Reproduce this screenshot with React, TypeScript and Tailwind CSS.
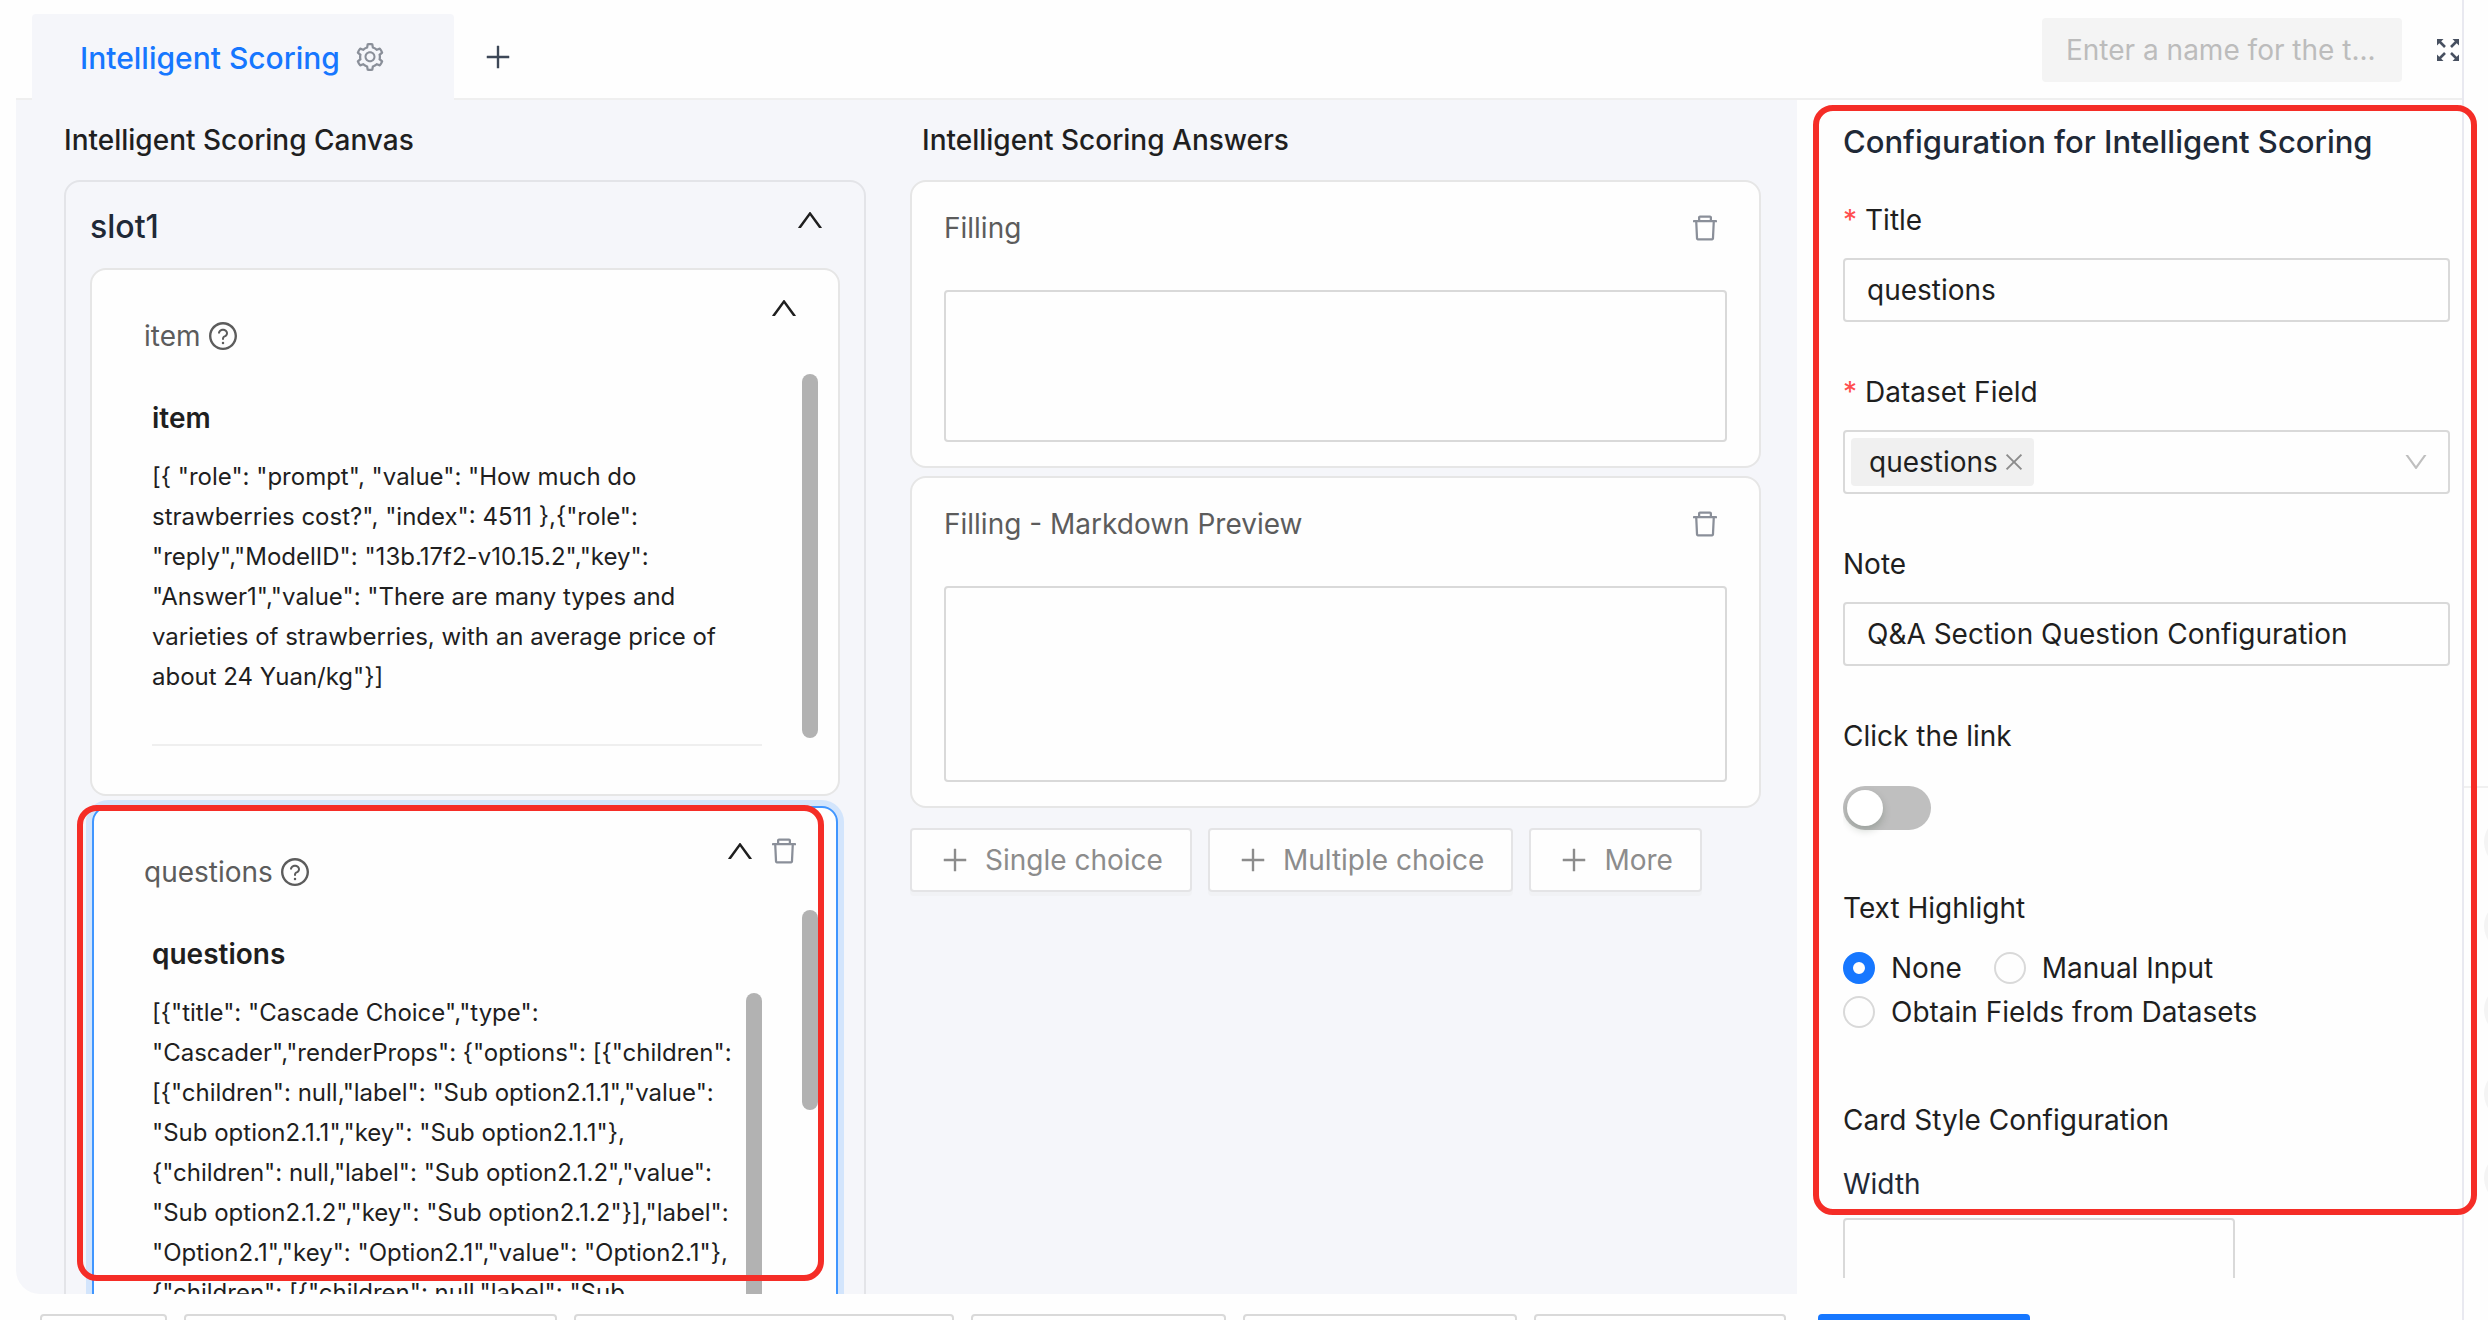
import { useState, type ReactNode } from "react";
import {
  AiOutlineSetting,
  AiOutlinePlus,
  AiOutlineUp,
  AiOutlineDown,
  AiOutlineDelete,
  AiOutlineQuestionCircle,
  AiOutlineClose,
} from "react-icons/ai";

function ExpandIcon() {
  return (
    <svg viewBox="0 0 22 22" className="size-[22px]" fill="none" stroke="#475060" strokeWidth="2.6">
      <path d="M2 2l6 6M20 2l-6 6M2 20l6-6M20 20l-6-6" />
      <path d="M0 0h6.5L0 6.5zM22 0v6.5L15.500 0zM0 22v-6.500L6.500 22zM22 22h-6.500L22 15.500z" fill="#475060" stroke="none" />
    </svg>
  );
}

function IconButton({ label, className, children }: { label: string; className?: string; children: ReactNode }) {
  return (
    <button type="button" aria-label={label} className={`flex size-7 items-center justify-center ${className ?? ""}`}>
      {children}
    </button>
  );
}

function Header() {
  return (
    <header className="flex h-[100px] shrink-0 items-end border-b-2 border-[#efefef] bg-[#fefefe] pl-4">
      <div className="-mb-0.5 flex h-[86px] w-[422px] items-center gap-4 rounded-t bg-[#f5f6fa] px-12">
        <button type="button" className="pt-0.5 text-[30px] leading-10 font-medium text-[#1677ff]">
          Intelligent Scoring
        </button>
        <IconButton label="Tab settings" className="text-[#8a8f99]">
          <AiOutlineSetting size={32} className="shrink-0" />
        </IconButton>
      </div>
      <IconButton label="Add tab" className="mb-[27px] ml-[30px] text-[#3d4757]">
        <AiOutlinePlus size={32} className="shrink-0" />
      </IconButton>
      <input
        aria-label="Template name"
        placeholder="Enter a name for the t..."
        className="mb-4 ml-auto h-16 w-[360px] rounded bg-[#f4f4f4] px-6 text-[28px] placeholder:text-[#bcbcbc]"
      />
      <button type="button" aria-label="Full screen" className="mr-[3px] mb-[37px] ml-[35px]">
        <ExpandIcon />
      </button>
    </header>
  );
}

function FieldCard({
  name,
  active,
  divider,
  text,
  thumb,
  inner,
}: {
  name: string;
  active?: boolean;
  divider?: boolean;
  text: string;
  thumb: string;
  inner?: boolean;
}) {
  return (
    <section
      className={`shrink-0 rounded-2xl border-2 bg-[#fefefe] ${
        active ? "mx-0.5 h-[760px] border-[#4096ff] pr-[18px] pl-[50px] shadow-[0_0_0_6px_#d3e5fc]" : "h-[528px] border-[#e6e6e6] pr-5 pl-[52px]"
      }`}
    >
      <div className={`flex justify-between pr-5 ${active ? "h-[102px]" : "h-[104px]"}`}>
        <h3 className={`flex items-center gap-1.5 text-[28px] leading-9 text-[#5c5c5c] ${active ? "pt-[26px]" : "pt-7"}`}>
          {name}
          <AiOutlineQuestionCircle size={32} />
        </h3>
        <div className={`flex gap-4 text-[#1f1f1f] ${active ? "pt-[29px]" : "pt-6"}`}>
          <IconButton label={`Collapse ${name}`}>
            <AiOutlineUp size={32} className="shrink-0" />
          </IconButton>
          {active && (
            <IconButton label={`Delete ${name}`} className="text-[#8a8f99]">
              <AiOutlineDelete size={32} className="shrink-0" />
            </IconButton>
          )}
        </div>
      </div>
      <div className="flex pl-2">
        <div className="min-w-0 flex-1 pt-[26px]">
          <h4 className="text-[28px] leading-9 font-semibold text-[#1f1f1f]">{name}</h4>
          <div className="mt-[21px] flex">
            <p className="min-w-0 flex-1 text-[24px] leading-10 whitespace-pre text-[#1f1f1f]">{text}</p>
            {inner && <div className="h-[560px] w-4 shrink-0 rounded-full bg-[#b2b2b2]" />}
          </div>
          {divider && <hr className="mt-[47px] border-t-2 border-[#efefef]" />}
        </div>
        <div className={`ml-10 w-4 shrink-0 rounded-full bg-[#b2b2b2] ${thumb}`} />
      </div>
    </section>
  );
}

const itemText = `[{ "role": "prompt", "value": "How much do
strawberries cost?", "index": 4511 },{"role":
"reply","ModelID": "13b.17f2-v10.15.2","key":
"Answer1","value": "There are many types and
varieties of strawberries, with an average price of
about 24 Yuan/kg"}]`;

const questionsText = `[{"title": "Cascade Choice","type":
"Cascader","renderProps": {"options": [{"children":
[{"children": null,"label": "Sub option2.1.1","value":
"Sub option2.1.1","key": "Sub option2.1.1"},
{"children": null,"label": "Sub option2.1.2","value":
"Sub option2.1.2","key": "Sub option2.1.2"}],"label":
"Option2.1","key": "Option2.1","value": "Option2.1"},
{"children": [{"children": null,"label": "Sub`;

function CanvasColumn() {
  return (
    <div className="w-[802px] shrink-0">
      <h2 className="flex h-20 items-center text-[28px] font-medium text-[#1f1f1f]">Intelligent Scoring Canvas</h2>
      <section className="rounded-2xl border-2 border-[#e3e4e8] px-6">
        <div className="flex h-[86px] justify-between pr-4">
          <h3 className="flex items-center pt-1 text-[32px] font-medium text-[#1f2937]">slot1</h3>
          <IconButton label="Collapse slot1" className="mt-6 text-[#1f1f1f]">
            <AiOutlineUp size={32} className="shrink-0" />
          </IconButton>
        </div>
        <div className="relative flex flex-col gap-[10px]">
          <FieldCard name="item" text={itemText} divider thumb="h-[364px]" />
          <FieldCard name="questions" text={questionsText} active inner thumb="h-[200px]" />
          <div className="pointer-events-none absolute top-[537px] right-4 -left-[13px] h-[476px] rounded-[20px] border-[6px] border-[#f52d27]" />
        </div>
      </section>
    </div>
  );
}

function AnswerCard({ title, area }: { title: string; area: string }) {
  return (
    <section className="mb-2 rounded-2xl border-2 border-[#e6e6e6] bg-[#fefefe] px-8 pb-6">
      <div className="flex h-[108px] items-start justify-between pt-7 pr-2">
        <h3 className="text-[28px] leading-9 text-[#5c5c5c]">{title}</h3>
        <IconButton label={`Delete ${title}`} className="mt-1 text-[#8a8f99]">
          <AiOutlineDelete size={32} className="shrink-0" />
        </IconButton>
      </div>
      <textarea aria-label={title} className={`block w-full resize-none rounded border-2 border-[#d9d9d9] bg-[#fefefe] ${area}`} />
    </section>
  );
}

function AnswersColumn() {
  return (
    <div className="min-w-0 flex-1">
      <h2 className="flex h-20 items-center pl-3 text-[28px] font-medium text-[#1f1f1f]">Intelligent Scoring Answers</h2>
      <AnswerCard title="Filling" area="h-[152px]" />
      <AnswerCard title="Filling - Markdown Preview" area="h-[196px]" />
      <div className="mt-5 flex gap-4">
        {["Single choice", "Multiple choice", "More"].map((label) => (
          <button
            key={label}
            type="button"
            className="flex h-16 items-center gap-[14px] rounded border-2 border-[#e4e4e6] bg-[#fefefe] px-[27px] text-[28px] text-[#8c8c8c] shadow-[0_4px_0_#f1f2f5]"
          >
            <AiOutlinePlus size={32} />
            {label}
          </button>
        ))}
      </div>
    </div>
  );
}

function FieldLabel({ htmlFor, required, children }: { htmlFor: string; required?: boolean; children: string }) {
  return (
    <label htmlFor={htmlFor} className="flex h-11 items-center gap-2 text-[28px] text-[#1f1f1f]">
      {required && <span className="text-[#ff4d4f]">*</span>}
      {children}
    </label>
  );
}

const inputClass = "h-16 w-full rounded border-2 border-[#d9d9d9] bg-[#fefefe] px-[22px] text-[28px] text-[#1f1f1f]";

function ConfigPanel() {
  const [linked, setLinked] = useState(false);
  const [mode, setMode] = useState("None");
  return (
    <aside className="relative w-[665px] shrink-0 pr-3 pb-4 pl-[46px]">
      <div className="flex h-full flex-col overflow-hidden">
        <h2 className="flex h-[84px] shrink-0 items-center text-[31px] font-medium text-[#1f2937]">
          Configuration for Intelligent Scoring
        </h2>
        <div className="flex shrink-0 flex-col gap-12 pt-[14px]">
          <div className="flex flex-col gap-4">
            <FieldLabel htmlFor="title" required>Title</FieldLabel>
            <input id="title" defaultValue="questions" className={inputClass} />
          </div>
          <div className="flex flex-col gap-4">
            <FieldLabel htmlFor="field" required>Dataset Field</FieldLabel>
            <button
              id="field"
              type="button"
              className="flex h-16 items-center justify-between rounded border-2 border-[#d9d9d9] pr-[18px] pl-1.5 text-[28px] text-[#1f1f1f]"
            >
              <span className="flex h-12 items-center gap-1 rounded bg-[#f0f0f0] pr-2 pl-[18px]">
                questions
                <AiOutlineClose size={24} className="text-[#8c8c8c]" />
              </span>
              <AiOutlineDown size={28} className="text-[#bfbfbf]" />
            </button>
          </div>
          <div className="flex flex-col gap-4">
            <FieldLabel htmlFor="note">Note</FieldLabel>
            <input id="note" defaultValue="Q&A Section Question Configuration" className={inputClass} />
          </div>
          <div className="flex flex-col gap-7 pb-2">
            <FieldLabel htmlFor="link">Click the link</FieldLabel>
            <input
              id="link"
              type="checkbox"
              role="switch"
              checked={linked}
              onChange={() => setLinked(!linked)}
              className="h-11 w-[88px] shrink-0 appearance-none rounded-full bg-[#bfbfbf] p-1 before:block before:size-9 before:rounded-full before:bg-white before:shadow-[0_4px_8px_rgba(0,35,11,0.2)] checked:bg-[#1677ff] checked:before:ml-11"
            />
          </div>
          <fieldset>
            <legend className="flex h-11 items-center text-[28px] text-[#1f1f1f]">Text Highlight</legend>
            <div className="mt-4 flex flex-wrap gap-x-8">
              {["None", "Manual Input", "Obtain Fields from Datasets"].map((option) => (
                <label key={option} className="flex h-11 items-center gap-4 text-[28px] text-[#1f1f1f]">
                  <input
                    type="radio"
                    name="highlight"
                    checked={mode === option}
                    onChange={() => setMode(option)}
                    className="size-8 appearance-none rounded-full border-2 border-[#d9d9d9] bg-[#fefefe] checked:border-[10px] checked:border-[#1677ff]"
                  />
                  {option}
                </label>
              ))}
            </div>
          </fieldset>
          <div className="flex flex-col pt-4">
            <h3 className="flex h-11 items-center text-[28px] text-[#1f1f1f]">Card Style Configuration</h3>
            <label htmlFor="width" className="mt-5 flex h-11 items-center text-[28px] text-[#1f2937]">Width</label>
            <input id="width" className="mt-3 h-20 w-[392px] rounded border-2 border-[#d9d9d9] bg-[#fefefe] px-[22px] text-[28px]" />
          </div>
        </div>
      </div>
      <div className="pointer-events-none absolute top-[5px] -right-[15px] left-4 h-[1110px] rounded-[20px] border-[6px] border-[#f52d27]" />
    </aside>
  );
}

const footerWidths = ["w-[127px]", "w-[373px]", "w-[380px]", "w-[255px]", "w-[274px]", "w-[252px]"];

function SideRail() {
  return (
    <nav aria-label="Tools" className="mt-auto w-6 shrink-0 border-t-2 border-[#f0f0f0] pt-7 pb-[116px]">
      <div className="flex flex-col gap-8 pl-5">
        {["One", "Two", "Three", "Four", "Five"].map((label) => (
          <button key={label} type="button" aria-label={`Tool ${label}`} className="size-[52px] shrink-0 rounded-full bg-[#f4f4f4]" />
        ))}
      </div>
    </nav>
  );
}

export default function App() {
  return (
    <div className="flex h-screen overflow-hidden bg-[#fefefe] font-[Inter,sans-serif]">
      <main className="relative z-10 ml-4 flex min-w-0 flex-1 flex-col border-r-2 border-[#e9e9f0]">
        <Header />
        <div className="flex min-h-0 flex-1">
          <div className="flex min-w-0 flex-1 gap-11 overflow-hidden rounded-bl-3xl bg-[#f5f6fa] pr-9 pl-12">
            <CanvasColumn />
            <AnswersColumn />
          </div>
          <ConfigPanel />
        </div>
        <footer className="flex h-[26px] shrink-0 gap-[17px] pt-5 pl-6">
          {footerWidths.map((w, i) => (
            <button key={w} type="button" aria-label={`Action ${i + 1}`} className={`h-16 shrink-0 rounded border-2 border-[#d9d9d9] ${w}`} />
          ))}
          <button type="button" aria-label="Save" className="ml-[15px] h-16 w-[212px] shrink-0 rounded bg-[#1677ff]" />
        </footer>
      </main>
      <SideRail />
    </div>
  );
}
